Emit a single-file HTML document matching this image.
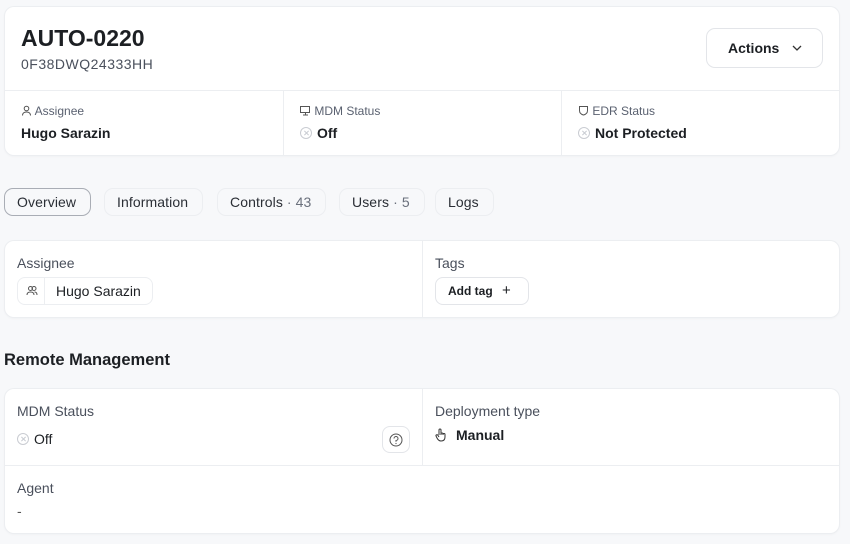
<!DOCTYPE html><html><head><style>
*{box-sizing:border-box;margin:0;padding:0}
body{width:850px;height:544px;background:#f7f8fa;font-family:"Liberation Sans",sans-serif;color:#1c1f23;position:relative;overflow:hidden}
.a{position:absolute}
.card{position:absolute;background:#fff;border-radius:9px;box-shadow:0 0 0 1px #eceef1,0 1px 3px rgba(0,0,0,.05)}
.lbl{font-size:12px;color:#5a6170}
.lbl2{font-size:14px;color:#4a505c}
.val{font-size:14px;font-weight:bold;color:#1c1f23}
.tab{position:absolute;top:188px;height:28px;border:1px solid #eceef1;border-radius:9px;font-size:14px;line-height:26px;padding:0 14px 0 12px;color:#2a2e35;background:#f7f8fa;letter-spacing:.1px}
.x{display:inline-block;width:12px;height:12px;border:1px solid #c9ccd2;border-radius:50%;vertical-align:-1px;position:relative;margin-right:5px}
.x:before,.x:after{content:"";position:absolute;left:5px;top:2px;width:1px;height:6px;background:#c9ccd2;transform:rotate(45deg)}
.x:after{transform:rotate(-45deg)}
</style></head><body>
<div class="card" style="left:5px;top:7px;width:834px;height:148px">
 <div class="a" style="left:16px;top:18px;font-size:23px;font-weight:bold">AUTO-0220</div>
 <div class="a" style="left:16px;top:49px;font-size:14px;color:#4a505c;letter-spacing:.5px">0F38DWQ24333HH</div>
 <div class="a" style="left:701px;top:21px;width:117px;height:40px;border:1px solid #e3e5e9;border-radius:9px;font-size:14px;font-weight:bold;line-height:38px;padding-left:21px">Actions <svg width="12" height="8" style="margin-left:8px;vertical-align:1px" viewBox="0 0 12 8"><path d="M2 2l4 4 4-4" fill="none" stroke="#333" stroke-width="1.3"/></svg></div>
 <div class="a" style="left:0;top:83px;width:834px;height:1px;background:#eceef1"></div>
 <div class="a" style="left:278px;top:84px;width:1px;height:64px;background:#eceef1"></div>
 <div class="a" style="left:556px;top:84px;width:1px;height:64px;background:#eceef1"></div>
 <div class="a lbl" style="left:16px;top:97px"><svg width="11" height="11" viewBox="0 0 11 11" style="vertical-align:-1px"><circle cx="5.5" cy="3.5" r="2.3" fill="none" stroke="#555" stroke-width="1"/><path d="M1.5 10.5c0-2.5 2-3.5 4-3.5s4 1 4 3.5" fill="none" stroke="#555"/></svg> Assignee</div>
 <div class="a val" style="left:16px;top:118px">Hugo Sarazin</div>
 <div class="a lbl" style="left:295px;top:97px"><svg width="11" height="11" viewBox="0 0 11 11" style="vertical-align:-1px"><rect x=".5" y="1.5" width="9" height="6" fill="none" stroke="#555"/><path d="M3 10h5M5.5 7.5v2.5" stroke="#555"/></svg> MDM Status</div>
 <div class="a val" style="left:295px;top:118px"><span class="x"></span>Off</div>
 <div class="a lbl" style="left:573px;top:97px"><svg width="11" height="11" viewBox="0 0 11 11" style="vertical-align:-1px"><path d="M1.5 1.5h8v4c0 2.5-2 4-4 4.5-2-.5-4-2-4-4.5z" fill="none" stroke="#555"/></svg> EDR Status</div>
 <div class="a val" style="left:573px;top:118px"><span class="x"></span>Not Protected</div>
</div>
<div class="tab" style="left:4px;border-color:#a9adb5;background:#f7f8fa">Overview</div>
<div class="tab" style="left:104px">Information</div>
<div class="tab" style="left:217px">Controls <span style="color:#6a707c">· 43</span></div>
<div class="tab" style="left:339px">Users <span style="color:#6a707c">· 5</span></div>
<div class="tab" style="left:435px">Logs</div>
<div class="card" style="left:5px;top:241px;width:834px;height:76px">
 <div class="a" style="left:417px;top:0;width:1px;height:76px;background:#eceef1"></div>
 <div class="a lbl2" style="left:12px;top:14px">Assignee</div>
 <div class="a" style="left:12px;top:36px;width:136px;height:28px;border:1px solid #eceef1;border-radius:8px">
  <div class="a" style="left:0;top:0;width:27px;height:26px;border-right:1px solid #eceef1"><svg width="12" height="12" viewBox="0 0 12 12" style="margin:7px 0 0 8px"><circle cx="4.5" cy="3.5" r="2" fill="none" stroke="#555"/><circle cx="8" cy="3.5" r="2" fill="none" stroke="#555"/><path d="M1 10c0-2 1.5-3 3.5-3s3.5 1 3.5 3M8.5 7c1.5 0 2.5 1 2.5 3" fill="none" stroke="#555"/></svg></div>
  <div class="a" style="left:38px;top:5px;font-size:14px">Hugo Sarazin</div>
 </div>
 <div class="a lbl2" style="left:430px;top:14px">Tags</div>
 <div class="a" style="left:430px;top:36px;width:94px;height:28px;border:1px solid #e3e5e9;border-radius:8px;font-size:12px;font-weight:bold;line-height:26px;padding-left:12px">Add tag <span style="font-weight:normal;font-size:15px;margin-left:6px">+</span></div>
</div>
<div class="a" style="left:4px;top:351px;font-size:16.5px;font-weight:bold">Remote Management</div>
<div class="card" style="left:5px;top:389px;width:834px;height:144px">
 <div class="a" style="left:417px;top:0;width:1px;height:76px;background:#eceef1"></div>
 <div class="a" style="left:0;top:76px;width:834px;height:1px;background:#eceef1"></div>
 <div class="a lbl2" style="left:12px;top:14px">MDM Status</div>
 <div class="a" style="left:12px;top:42px;font-size:14px"><span class="x"></span>Off</div>
 <div class="a" style="left:377px;top:37px;width:28px;height:27px;border:1px solid #e3e5e9;border-radius:8px"><svg width="14" height="14" viewBox="0 0 14 14" style="margin:6px 0 0 6px"><circle cx="7" cy="7" r="6" fill="none" stroke="#555"/><path d="M5 5.5a2 2 0 1 1 2 2v1.2" fill="none" stroke="#555"/><circle cx="7" cy="10.5" r=".6" fill="#555"/></svg></div>
 <div class="a lbl2" style="left:430px;top:14px">Deployment type</div>
 <div class="a" style="left:430px;top:38px;font-size:14px;font-weight:bold"><svg width="13" height="14" viewBox="0 0 13 14" style="vertical-align:-2px;margin-right:8px"><path d="M4 7V2a1 1 0 0 1 2 0v5m0-1a1 1 0 0 1 2 0v1m0-.5a1 1 0 0 1 2 0V9c0 2.5-1.5 4-4 4-2 0-3-1-4-3l-1-2a1 1 0 0 1 2-.5L4 9" fill="none" stroke="#333"/></svg>Manual</div>
 <div class="a lbl2" style="left:12px;top:91px">Agent</div>
 <div class="a" style="left:12px;top:114px;font-size:14px;color:#555">-</div>
</div>
</body></html>
